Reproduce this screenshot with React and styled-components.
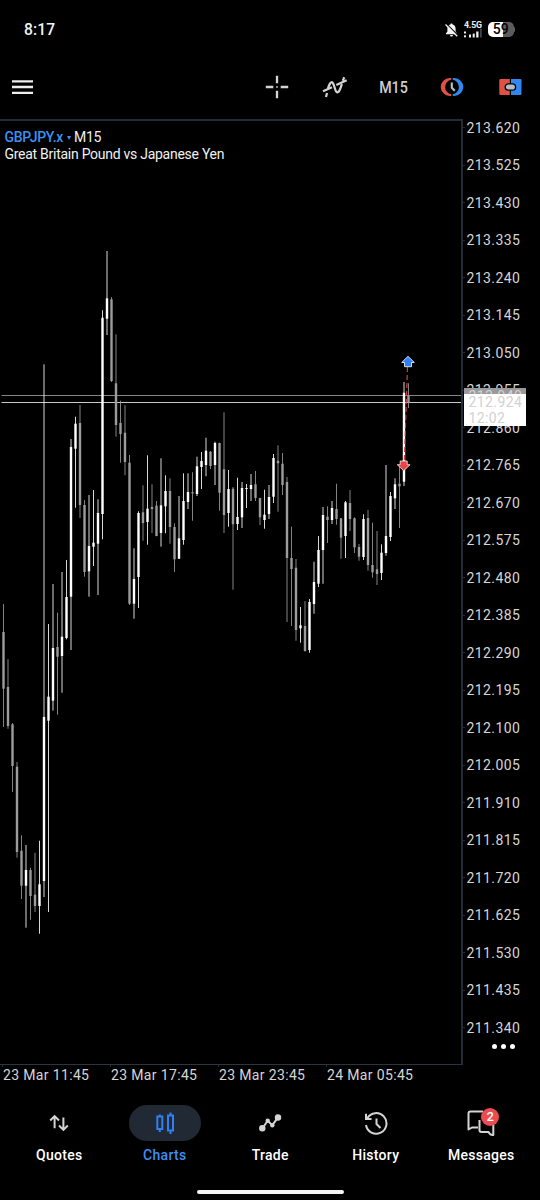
import React from 'react';
import styled, { createGlobalStyle } from 'styled-components';

const GlobalStyle = createGlobalStyle`
  * {
    box-sizing: border-box;
  }

  body {
    margin: 0;
    background: #000;
    font-family: Roboto, "Liberation Sans", sans-serif;
  }
`;

const Screen = styled.div`
  width: 540px;
  height: 1200px;
  display: flex;
  flex-direction: column;
  background: #000;
  color: #fff;
  overflow: hidden;
`;

const StatusBar = styled.header`
  height: 58px;
  display: flex;
  align-items: center;
  justify-content: space-between;
  padding: 1px 25px 0 24px;
`;

const Clock = styled.span`
  font-size: 15.6px;
  font-weight: 500;
  letter-spacing: 0.1px;
  color: #f2f2f2;
`;

const StatusIcons = styled.div`
  display: flex;
  align-items: center;
  gap: 6px;
`;

const Network = styled.div`
  width: 18px;
  display: flex;
  flex-direction: column;
  gap: 1px;
`;

const NetworkName = styled.span`
  font-size: 8.8px;
  line-height: 9px;
  font-weight: 700;
  letter-spacing: -0.2px;
  color: #eee;
`;

const Battery = styled.div`
  display: flex;
  align-items: center;
`;

const BatteryBody = styled.div`
  width: 25.5px;
  height: 14.5px;
  border-radius: 5px;
  background: linear-gradient(to right, #fff ${(props) => props.$level}%, #5c5c5c ${(props) => props.$level}%);
  color: #000;
  font-size: 14px;
  line-height: 15px;
  font-weight: 500;
  text-align: center;
`;

const BatteryTip = styled.div`
  width: 1.5px;
  height: 5px;
  border-radius: 0 2px 2px 0;
  background: #5c5c5c;
`;

const Toolbar = styled.div`
  height: 61px;
  display: flex;
  align-items: center;
  padding: 0 17px 3px 12px;
`;

const Tools = styled.div`
  margin-left: auto;
  display: grid;
  grid-template-columns: repeat(5, 58.5px);
  align-items: center;
  justify-items: center;
  margin-right: -16.8px;
`;

const Timeframe = styled.span`
  font-size: 16.4px;
  font-weight: 500;
  color: #cfcfcf;
  transform: scaleX(0.87);
`;

const ChartArea = styled.main`
  height: 946px;
  display: flex;
`;

const Plot = styled.section`
  width: 463px;
  display: grid;
  border-top: 2px solid #242c37;
  border-right: 2px solid #242c37;
  border-bottom: 1px solid #2a3542;

  > * {
    grid-area: 1 / 1;
  }
`;

const Legend = styled.div`
  padding: 8px 0 0 4.5px;
  font-size: 14px;
  line-height: 17px;
  letter-spacing: -0.27px;
  color: #f0f0f0;
`;

const SymbolRow = styled.div`
  display: flex;
  align-items: center;
`;

const SymbolName = styled.span`
  font-weight: 500;
  color: #3d8ff5;
`;

const Caret = styled.span`
  margin: 0 3px 0 4px;
  border: 2.5px solid transparent;
  border-top: 4px solid #3d8ff5;
  border-bottom: none;
`;

const PriceAxis = styled.aside`
  position: relative;
  flex: 1;
  padding-top: 8px;
  margin-top: -18px;
  height: 960px;
`;

const PriceLabel = styled.div`
  height: 37.5px;
  display: flex;
  align-items: center;
  font-size: 14px;
  letter-spacing: 0.4px;
  color: #d6d6d6;

  &::before {
    content: '';
    width: 2px;
    height: 1px;
    margin-right: 1.5px;
    background: #242c37;
  }
`;

const PriceTag = styled.div`
  position: absolute;
  left: 1px;
  top: ${(props) => props.$top}px;
  width: 62px;
  height: ${(props) => props.$height}px;
  padding-left: 4.5px;
  background: ${(props) => props.$color};
  color: #d2d2d2;
  font-size: 14px;
  line-height: 16px;
  letter-spacing: 0.4px;
`;

const More = styled.div`
  display: flex;
  gap: 4px;
  position: absolute;
  left: 28.5px;
  top: 942.5px;
`;

const Dot = styled.i`
  width: 5px;
  height: 5px;
  border-radius: 50%;
  background: #fff;
`;

const TimeAxis = styled.div`
  height: 29px;
  padding-left: 2px;
  display: grid;
  grid-template-columns: repeat(4, 108px);
`;

const TimeLabel = styled.div`
  font-size: 14px;
  line-height: 17px;
  letter-spacing: 0.35px;
  color: #d6d6d6;
  white-space: nowrap;

  &::before {
    content: '';
    display: block;
    width: 1px;
    height: 2px;
    background: #242c37;
  }

  > span {
    padding-left: 1px;
  }
`;

const Nav = styled.nav`
  height: 85px;
  padding: 11px 6px 0 6.5px;
  display: grid;
  grid-template-columns: repeat(5, 1fr);
`;

const NavItem = styled.div`
  display: flex;
  flex-direction: column;
  align-items: center;
  gap: 5px;
  font-size: 14px;
  line-height: 18px;
  font-weight: 500;
  letter-spacing: 0.3px;
  color: ${(props) => (props.$active ? '#3d8ff5' : '#fff')};
`;

const NavPill = styled.div`
  position: relative;
  width: 72px;
  height: 36px;
  border-radius: 18px;
  display: flex;
  align-items: center;
  justify-content: center;
  background: ${(props) => (props.$active ? '#202934' : 'transparent')};
`;

const Badge = styled.span`
  position: absolute;
  left: 36px;
  top: 3px;
  width: 18px;
  height: 18px;
  border-radius: 50%;
  background: #ec4b4f;
  color: #fff;
  font-size: 13px;
  line-height: 18px;
  letter-spacing: 0;
  text-align: center;
`;

const HomeBar = styled.div`
  width: 147px;
  height: 4px;
  margin: 10.5px 0 0 196.5px;
  border-radius: 2px;
  background: #f4f4f4;
`;

// [high, low, body top, body bottom, rising] in screen pixels, one per 15 minutes
const candles = [
  [604, 727, 632, 688.7, 0], [659.3, 728.7, 687, 726, 0], [723, 792, 724.3, 766, 0],
  [762, 857.7, 766.7, 852, 0], [835.3, 899, 850.7, 885.7, 0], [845, 927.7, 870, 885.7, 1],
  [867.7, 919.7, 870, 896, 0], [852.7, 912, 894.7, 906, 0], [840.7, 933.7, 884.3, 906, 1],
  [364.3, 897, 717, 881, 1], [624, 912, 696.7, 720.7, 1], [584, 710.7, 648, 700.7, 1],
  [612.7, 714.7, 647, 656.7, 0], [572, 692.7, 636.7, 656, 1], [560, 639.3, 597, 638, 1],
  [439, 650, 447, 596.7, 1], [416.7, 507.7, 423.7, 448.7, 1], [405, 518, 423, 505, 0],
  [500, 576.7, 505, 572, 0], [495, 596.7, 546, 571.3, 1], [490, 566, 542.7, 546.7, 1],
  [499.3, 595, 513, 543.7, 1], [310.3, 539.3, 317.7, 514, 1], [251, 335, 298.3, 318.7, 1],
  [297, 382, 299.3, 381, 0], [334.3, 436.7, 383.3, 425, 0], [400.7, 462.7, 423, 434, 0],
  [405.3, 475.3, 432.7, 462, 0], [455, 605, 462.7, 603.7, 0], [548.3, 618.7, 579, 603.7, 1],
  [511.3, 608, 513, 577, 1], [485.3, 540.7, 512.3, 523, 0], [455.3, 544.7, 508.7, 522, 1],
  [484.3, 533, 507, 509, 0], [501, 536.3, 505.7, 536, 0], [458.3, 546.7, 505.3, 533, 1],
  [475.3, 533.3, 491, 506.3, 1], [478.3, 543.7, 491, 527, 0], [523.3, 572, 527, 559.3, 0],
  [496, 559, 538.3, 558.7, 1], [473.3, 544.7, 501, 540, 1], [473.3, 509, 492, 502, 1],
  [472.3, 520.7, 492.2, 493.4, 0], [456.7, 496, 466.3, 494, 1], [452, 489, 461, 467, 1],
  [437.7, 476.3, 450.7, 465, 1], [451, 469, 451.7, 466, 0], [441.7, 485, 443, 465, 1],
  [442.7, 510.7, 443, 492.7, 0], [412.3, 533, 469.3, 515, 0], [470, 526.7, 489, 513, 1],
  [487, 589.7, 488.7, 524.3, 0], [477.7, 530, 517, 524, 1], [482, 528, 488, 517.3, 1],
  [484, 508, 488, 489, 1], [474, 501, 485, 489, 1], [471, 501, 484.3, 498, 0],
  [498, 525, 498, 517.3, 0], [489.7, 528.7, 514.7, 520, 1], [485, 519, 497, 514, 1],
  [454, 503, 458, 496.7, 1], [445.3, 511.7, 460.7, 463.3, 0], [453, 495, 463.7, 485, 0],
  [477, 622, 482, 558, 0], [526.7, 626, 558, 569, 0], [559, 640.7, 567.7, 630, 0],
  [607, 642.7, 625.3, 628.3, 1], [601, 651.7, 626, 651, 0], [599, 652.7, 602, 650, 1],
  [561.7, 613.7, 582, 604, 1], [536, 587, 550, 583.7, 1], [507, 583.7, 515, 550, 1],
  [506.3, 543, 516.7, 520, 0], [501, 524, 508, 520, 1], [483.7, 524.7, 509, 519, 0],
  [518, 558.7, 518.3, 537.7, 0], [501, 558, 502.3, 536, 1], [490, 531, 503, 519, 0],
  [517.3, 553, 518.3, 547.3, 0], [544, 560.7, 547, 556.7, 0], [514.3, 560, 519, 557, 1],
  [510, 570.7, 518, 565, 0], [522.7, 577.7, 565, 572.3, 0], [531, 585, 569.3, 574, 0],
  [544.3, 580, 552.7, 573, 1], [465, 555.7, 536, 553, 1], [492, 541, 496, 537, 1],
  [478.3, 509, 484.3, 498.3, 1], [465, 528, 483.7, 486.3, 0], [382, 486, 392.7, 481.7, 1],
  [383.3, 408, 396, 402.7, 0],
];

const Candle = ({ index, data }) => {
  const [high, low, top, bottom, rising] = data;
  const x = 3.5 + index * 4.5;
  return (
    <g fill={rising ? '#fff' : '#9c9c9c'}>
      <rect x={x - 0.42} y={high} width="0.84" height={low - high} />
      <rect x={x - 1.2} y={top} width="2.4" height={bottom - top} />
    </g>
  );
};

const CandleChart = () => (
  <svg width="461" height="943" viewBox="0 121 461 943">
    <rect x="1.5" y="395" width="460" height="1" fill="#858585" />
    <rect x="1.5" y="402" width="460" height="1" fill="#c8c8c8" />
    {candles.map((data, index) => (
      <Candle key={index} index={index} data={data} />
    ))}
    <path d="M407.5 367 L404.3 461" stroke="#d63c3c" strokeWidth="1.2" strokeDasharray="5 3" />
    <path d="M408 356.3 L414.3 362.5 H411.5 V366.7 H404.5 V362.5 H401.7 Z" fill="#2f80f5" stroke="#e8eef5" strokeWidth="0.9" />
    <path d="M403.7 470.7 L397.3 464.7 H400.2 V461 H407.2 V464.7 H410.1 Z" fill="#ec4444" stroke="#f0dada" strokeWidth="0.9" />
  </svg>
);

const MenuIcon = () => (
  <svg width="21" height="18" viewBox="0 0 21 18" stroke="#eee" strokeWidth="2.3">
    <path d="M0 3.3H21M0 9H21M0 14.8H21" />
  </svg>
);

const BellOffIcon = () => (
  <svg width="13" height="14" viewBox="0 0 13 14">
    <path d="M6.5 .4c-.8 0-1.1.5-1.1 1.1C3.3 2 2.4 3.7 2.4 5.5V8.5L.9 10.4V11.2H12V10.4L10.6 8.5V5.5C10.6 3.7 9.7 2 7.6 1.5 7.6.9 7.3.4 6.5.4ZM5.1 12H7.9C7.9 14 5.1 14 5.1 12Z" fill="#f2f2f2" />
    <path d="M1.5 .8L13 12.3" stroke="#000" strokeWidth="1.2" />
    <path d="M.5 1.5L12.2 13.2" stroke="#f2f2f2" strokeWidth="1.3" />
  </svg>
);

const SignalBars = () => (
  <svg width="18" height="7" viewBox="0 0 18 7" fill="#eee" overflow="visible">
    <rect x="0" y="0.5" width="2" height="2" />
    <rect x="0" y="4.3" width="2" height="2" />
    <rect x="5" y="3.5" width="2" height="3" />
    <rect x="8.7" y="2.6" width="2" height="3.9" />
    <rect x="12.2" y="0.5" width="2.3" height="6" />
    <rect x="16.2" y="-2.5" width="1.4" height="9" fill="#555" />
  </svg>
);

const CrosshairIcon = () => (
  <svg width="24" height="24" viewBox="-12 -12 24 24" stroke="#d4d4d4" strokeWidth="2.3">
    <path d="M-11.2 0H-3.7M3.7 0H11.2M0 -11.2V-3.7M0 3.7V11.2" />
    <path d="M-.8 0H.8" strokeWidth="1.5" />
  </svg>
);

const IndicatorIcon = () => (
  <svg width="26" height="22.7" viewBox="0 0 78 68" fill="none" stroke="#d4d4d4" strokeWidth="6.6">
    <path d="M12 63L15 51M18 37C22 24 27 15 32 20C39 28 38 48 46 49C54 48 55 35 60 24M62 14L67 4" />
    <path d="M3 46L30 34M43 27L74 13" />
  </svg>
);

const SessionIcon = () => (
  <svg width="24" height="20" viewBox="-12 -10 24 20" fill="none">
    <path d="M-.7 -9H-2.3A9 9 0 0 0 -2.3 9H-.7V7.3A7.4 7.4 0 0 1 -.7 -7.3Z" fill="#de5145" />
    <path d="M.7 -9H2.3A9 9 0 0 1 2.3 9H.7V7.3A7.4 7.4 0 0 0 .7 -7.3Z" fill="#3286f0" />
    <path d="M-.2 -4.5V.8L2.8 3.8" stroke="#b4c2cb" strokeWidth="2.1" />
  </svg>
);

const OneClickIcon = () => (
  <svg width="23" height="16" viewBox="0 0 23 16">
    <path d="M1.5 0H10.8V16H1.5Q.3 16 .3 14.8V1.2Q.3 0 1.5 0Z" fill="#de5145" />
    <path d="M12 0H21.3Q22.5 0 22.5 1.2V14.8Q22.5 16 21.3 16H12Z" fill="#3286f0" />
    <rect x="6.2" y="4.8" width="10.4" height="6.4" rx="3.2" fill="#b0bec8" stroke="#000" strokeWidth="1.3" />
  </svg>
);

const QuotesIcon = () => (
  <svg width="20" height="18" viewBox="0 0 20 18" fill="none" stroke="#d4d4d4" strokeWidth="2">
    <path d="M5.6 14.2V2.2M1.2 6.5L5.6 2.1L10 6.5M14.4 3.5V15.8M10 11.5L14.4 15.9L18.8 11.5" />
  </svg>
);

const ChartsIcon = () => (
  <svg width="20" height="24" viewBox="0 0 20 24" fill="none" stroke="#2f80f0" strokeWidth="2">
    <path d="M2.3 5.5H7.3V18H2.3ZM13 4.5H18V19.5H13ZM4.8 3.5V5.5M4.8 18V21M15.5 1.5V4.5M15.5 19.5V23" />
  </svg>
);

const TradeIcon = () => (
  <svg width="24" height="20" viewBox="0 0 24 20" fill="#d4d4d4">
    <path d="M4.5 15.2L9.7 7.7L14.3 12.2L20 4.3" fill="none" stroke="#d4d4d4" strokeWidth="2" />
    <circle cx="4.3" cy="15.3" r="3.2" />
    <circle cx="9.7" cy="7.8" r="2.2" />
    <circle cx="14.3" cy="12.2" r="2.2" />
    <circle cx="20" cy="4.5" r="3.2" />
  </svg>
);

const HistoryIcon = () => (
  <svg width="24" height="24" viewBox="0 0 24 24" fill="none" stroke="#d4d4d4" strokeWidth="2">
    <path d="M2 14A10.3 10.3 0 1 0 3.3 7.2M2 2.8V8H7.5M12.5 7.5V13L16.5 17" />
  </svg>
);

const MessagesIcon = () => (
  <svg width="28" height="27" viewBox="0 0 28 27" fill="none" stroke="#d4d4d4" strokeWidth="2" strokeLinejoin="round">
    <path d="M16 1.5H3.5Q1.5 1.5 1.5 3.5V19.5L5 17.5H11" />
    <path d="M12.5 10V20Q12.5 22 14.5 22H21.5Q23.5 25.5 26.3 25V13.5" />
  </svg>
);

const prices = Array.from({ length: 25 }, (_, i) => (213.62 - i * 0.095).toFixed(3));
const times = ['23 Mar 11:45', '23 Mar 17:45', '23 Mar 23:45', '24 Mar 05:45'];

const tabs = [
  { label: 'Quotes', Icon: QuotesIcon },
  { label: 'Charts', Icon: ChartsIcon, active: true },
  { label: 'Trade', Icon: TradeIcon },
  { label: 'History', Icon: HistoryIcon },
  { label: 'Messages', Icon: MessagesIcon, badge: 2 },
];

export default function App() {
  return (
    <Screen>
      <GlobalStyle />
      <StatusBar>
        <Clock>8:17</Clock>
        <StatusIcons>
          <BellOffIcon />
          <Network>
            <NetworkName>4.5G</NetworkName>
            <SignalBars />
          </Network>
          <Battery>
            <BatteryBody $level={59}>59</BatteryBody>
            <BatteryTip />
          </Battery>
        </StatusIcons>
      </StatusBar>
      <Toolbar>
        <MenuIcon />
        <Tools>
          <CrosshairIcon />
          <IndicatorIcon />
          <Timeframe>M15</Timeframe>
          <SessionIcon />
          <OneClickIcon />
        </Tools>
      </Toolbar>
      <ChartArea>
        <Plot>
          <CandleChart />
          <Legend>
            <SymbolRow>
              <SymbolName>GBPJPY.x</SymbolName>
              <Caret />
              <span>M15</span>
            </SymbolRow>
            <div>Great Britain Pound vs Japanese Yen</div>
          </Legend>
        </Plot>
        <PriceAxis>
          {prices.map((price) => (
            <PriceLabel key={price}>{price}</PriceLabel>
          ))}
          <PriceTag $top={287} $height={32} $color="#9a9a9a">212.940</PriceTag>
          <PriceTag $top={293} $height={32} $color="#fff">
            212.924
            <br />
            12:02
          </PriceTag>
          <More>
            <Dot />
            <Dot />
            <Dot />
          </More>
        </PriceAxis>
      </ChartArea>
      <TimeAxis>
        {times.map((time) => (
          <TimeLabel key={time}>
            <span>{time}</span>
          </TimeLabel>
        ))}
      </TimeAxis>
      <Nav>
        {tabs.map(({ label, Icon, active, badge }) => (
          <NavItem key={label} $active={active}>
            <NavPill $active={active}>
              <Icon />
              {badge && <Badge>{badge}</Badge>}
            </NavPill>
            {label}
          </NavItem>
        ))}
      </Nav>
      <HomeBar />
    </Screen>
  );
}
